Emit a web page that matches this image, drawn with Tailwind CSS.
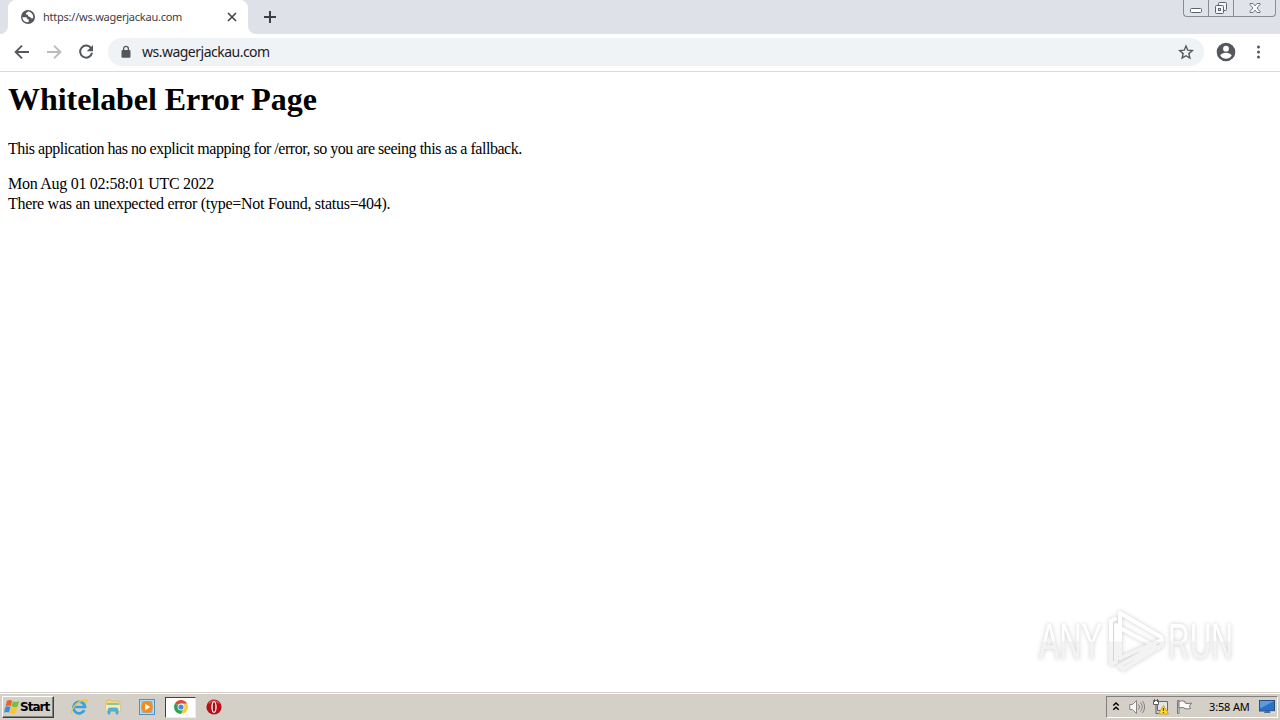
<!DOCTYPE html>
<html lang="en">
<head>
  <meta charset="UTF-8">
  <title>https://ws.wagerjackau.com</title>
  <script src="https://cdn.jsdelivr.net/npm/@tailwindcss/browser@4"></script>
</head>
<body class="w-[1280px] h-[720px] overflow-hidden flex flex-col bg-white text-black font-['Noto_Sans',sans-serif]">

  <!-- Tab strip -->
  <header class="h-[34px] shrink-0 bg-[#dee1e8] flex items-start">
    <div class="relative ml-2 w-[240px] h-[34px] rounded-t-lg bg-white flex items-center pl-[13px] pr-[10px]">
      <svg class="absolute -left-2 bottom-0" width="8" height="8"><path d="M8 0v8H0a8 8 0 0 0 8-8z" fill="#fff"/></svg>
      <svg class="absolute -right-2 bottom-0" width="8" height="8"><path d="M0 0v8h8a8 8 0 0 1-8-8z" fill="#fff"/></svg>
      <svg width="14" height="14" viewBox="0 0 14 14">
        <circle cx="7" cy="7" r="7" fill="#54575b"/>
        <path d="M1.4 7.2h3.2c1 0 1.6.6 1.6 1.5v.6h1.5v2.8c-3.5.6-6.2-1.7-6.3-4.9zM7.3 1.5c-.9 1-2.2 1-2.4 2-.1.9.5 1.3 1.5 1.3h.4c.2 1.7 1 2.2 2.5 2.2l.5 1.3h2.4c.6-3.3-1.7-6.3-4.9-6.8z" fill="#fff"/>
      </svg>
      <span class="ml-2 flex-1 text-[11px] leading-4 tracking-[-0.24px] text-[#3c4043] whitespace-nowrap">https://ws.wagerjackau.com</span>
      <svg width="12" height="12" viewBox="0 0 12 12" stroke="#45494d" stroke-width="1.7"><path d="M2 2l8 8M10 2l-8 8"/></svg>
    </div>
    <svg class="ml-[15px] mt-[10px]" width="14" height="14" viewBox="0 0 14 14" stroke="#3c4043" stroke-width="2"><path d="M7 1v12M1 7h12"/></svg>

    <!-- Window buttons -->
    <div class="ml-auto mr-1 w-[93px] h-[17px] flex border border-t-0 border-[#888c94] rounded-b-[4px] bg-[#e0e3e9]">
      <div class="w-[25px] border-r border-[#888c94] flex justify-center">
        <svg width="14" height="16" fill="#fff" stroke="#5c626e"><rect x="1.5" y="8.5" width="11" height="4" rx="1"/></svg>
      </div>
      <div class="w-[25px] border-r border-[#888c94] flex justify-center">
        <svg width="14" height="16" fill="#f5f6f8" stroke="#5c626e"><rect x="4.5" y="2.5" width="8" height="8" rx="1"/><rect x="1.5" y="5.5" width="8" height="8" rx="1"/><rect x="4.5" y="8.5" width="2" height="2"/></svg>
      </div>
      <div class="flex-1 flex justify-center">
        <svg width="12" height="16" fill="#fff" stroke="#6c727d" stroke-linejoin="round"><path d="M1 3.5h3l2 2.4 2-2.4h3v1L8 8l3 3.5v1H8L6 10.1 4 12.5H1v-1L4 8 1 4.5z"/></svg>
      </div>
    </div>
  </header>

  <!-- Toolbar -->
  <nav class="h-[38px] shrink-0 border-b border-[#d9dbde] bg-white flex items-center pl-[14px] pr-[14px] pb-px">
    <svg width="16" height="16" viewBox="0 0 16 16" fill="none" stroke="#54585c" stroke-width="1.9"><path d="M15 8H2.2M8 1.6L1.6 8 8 14.4"/></svg>
    <svg class="ml-4" width="16" height="16" viewBox="0 0 16 16" fill="none" stroke="#b9bbbe" stroke-width="1.9"><path d="M1 8h12.8M8 1.6L14.4 8 8 14.4"/></svg>
    <svg class="ml-4" width="16" height="16" viewBox="0 0 16 16"><path d="M13.2 4.4A6 6 0 1 0 14 8.8" fill="none" stroke="#54585c" stroke-width="2"/><path d="M15 1v6.2H8.8z" fill="#54585c"/></svg>
    <div class="ml-[14px] w-[1096px] h-7 rounded-full bg-[#f0f3f6] flex items-center pl-[13px] pr-[10px]">
      <svg width="10" height="14" viewBox="0 0 10 14"><rect x=".5" y="5" width="9" height="7.8" rx="1" fill="#54585c"/><path d="M2.6 5.5V3.7a2.4 2.4 0 0 1 4.8 0v1.8" fill="none" stroke="#54585c" stroke-width="1.3"/></svg>
      <span class="ml-[11px] flex-1 text-[14px] leading-5 tracking-[-0.51px] text-[#202124] whitespace-nowrap">ws.wagerjackau.com</span>
      <svg width="16" height="16" viewBox="0 0 16 16" fill="none" stroke="#54585c" stroke-width="1.4"><path d="M8 2l1.75 4.2 4.55.4-3.45 3 1.03 4.45L8 11.7l-3.88 2.35L5.15 9.6l-3.45-3 4.55-.4z"/></svg>
    </div>
    <svg class="ml-3" width="20" height="20" viewBox="0 0 20 20"><circle cx="10" cy="10" r="9.3" fill="#54585c"/><circle cx="10" cy="6.7" r="2.9" fill="#fff"/><path d="M4.4 13.7c0-1.9 3.7-2.9 5.6-2.9s5.6 1 5.6 2.9a6.7 6.7 0 0 1-11.2 0z" fill="#fff"/></svg>
    <svg class="ml-5" width="5" height="16" viewBox="0 0 5 16" fill="#54585c"><circle cx="2.5" cy="3" r="1.5"/><circle cx="2.5" cy="8" r="1.5"/><circle cx="2.5" cy="13" r="1.5"/></svg>
  </nav>

  <!-- Page content -->
  <main class="relative flex-1 px-2 pt-[9px] font-['Liberation_Serif',serif] text-[16px] leading-5 whitespace-nowrap">
    <h1 class="text-[32px] leading-[37px] tracking-[-0.05px] font-bold">Whitelabel Error Page</h1>
    <p class="mt-[21px] tracking-[-0.47px]">This application has no explicit mapping for /error, so you are seeing this as a fallback.</p>
    <div class="mt-[15px] tracking-[-0.28px]">Mon Aug 01 02:58:01 UTC 2022</div>
    <div class="tracking-[-0.28px]">There was an unexpected error (type=Not Found, status=404).</div>

    <!-- Watermark -->
    <div class="absolute left-[1038px] top-[536px] w-[196px] h-[66px] drop-shadow-[0_0_2px_rgba(0,0,0,0.2)]">
      <svg class="overflow-visible" width="196" height="66" viewBox="0 0 196 66" fill="none">
        <defs>
          <linearGradient id="wm" x1="0" y1="0" x2="0" y2="66" gradientUnits="userSpaceOnUse"><stop offset=".5" stop-color="#fff"/><stop offset=".51" stop-color="#f3f3f3"/></linearGradient>
        </defs>
        <g font-family="Liberation Sans Narrow, Liberation Sans, sans-serif" font-size="50" fill="url(#wm)">
          <text x="1" y="51" textLength="63" lengthAdjust="spacingAndGlyphs">ANY</text>
          <text x="130" y="51" textLength="65" lengthAdjust="spacingAndGlyphs">RUN</text>
        </g>
        <g stroke="url(#wm)" stroke-width="4" stroke-linejoin="round" stroke-linecap="round">
          <path d="M82 47V5l41 24"/>
          <path d="M77 11l-4 2v43l5-2V17M82 20l38 20"/>
          <path d="M82 50l42-18v5L85 61l-4-3 35-20"/>
        </g>
      </svg>
    </div>
  </main>

  <!-- Taskbar -->
  <footer class="h-[28px] shrink-0 bg-[#d4d0c8] border-t border-[#d4d0c8] shadow-[inset_0_1px_0_#fff] flex items-center pl-[2px] pr-[2px] pt-px">
    <div class="w-[52px] h-[22px] bg-[#d4d0c8] border border-t-white border-l-white border-r-[#404040] border-b-[#404040] shadow-[inset_-1px_-1px_0_#808080] flex items-center pl-px">
      <svg width="16" height="16" viewBox="0 0 16 16">
        <path d="M3 1.8c2-1.4 3.6-1 5.2 0L6.7 7.2c-1.5-.9-3.2-1-5.2.1z" fill="#e8642c"/>
        <path d="M8.9 2.2c1.8 1 3.9 1 6.3-.2l-1.6 5.4c-2 1.2-4.2 1.1-6.1.1z" fill="#7dbb42"/>
        <path d="M1.3 8.1c1.9-1.1 3.6-1 5.2-.1L5 13.6c-1.6-.9-3.3-.9-5 .1z" fill="#3e8ed0"/>
        <path d="M7.3 8.4c1.9 1 3.9.9 6-.1l-1.6 5.6c-2.1 1.2-4 1-5.9 0z" fill="#f6c52f"/>
      </svg>
      <span class="font-['DejaVu_Sans',sans-serif] text-[12px] leading-4 font-bold tracking-[-1px]">Start</span>
    </div>
    <div class="ml-[16px] flex items-center">
      <svg width="18" height="18" viewBox="0 0 18 18" fill="none">
        <path d="M14.4 12.2A5.8 5.8 0 1 1 15 9H5" stroke="#36a3df" stroke-width="2.7"/>
        <path d="M2.2 15.8C-.5 13 6.5 3.3 14 2c3.2-.5 3.3 1.3 2.1 3.4" stroke="#ecc34b" stroke-width="1.4"/>
      </svg>
      <svg class="ml-4" width="18" height="18" viewBox="0 0 18 18">
        <path d="M2 3l1-1h4l1 1h7l1 1v9H2z" fill="#efd784" stroke="#d1b355" stroke-width=".6"/>
        <path d="M3 5h12v2H3z" fill="#8bc79d"/><path d="M2 7h14v6H2z" fill="#f8e9ad"/>
        <path d="M4 16v-4q0-2 2-2h6q2 0 2 2v4h-2v-3H6v3z" fill="#58b4df" stroke="#3796c5" stroke-width=".6"/>
      </svg>
      <svg class="ml-[17px]" width="16" height="16" viewBox="0 0 16 16">
        <rect x=".5" y=".5" width="15" height="15" fill="#b8dcf2" stroke="#4b91c5"/><rect x="2.5" y="2" width="11" height="12" fill="#82bbe0"/>
        <circle cx="8" cy="8" r="5.9" fill="#f58a1f"/><path d="M6.2 4.8l5 3.2-5 3.2z" fill="#fff"/>
      </svg>
      <div class="ml-[10px] w-[31px] h-[21px] bg-white border border-t-[#404040] border-l-[#404040] border-r-[#eee] border-b-[#eee] flex items-center justify-center">
        <svg width="14" height="14" viewBox="0 0 14 14">
          <path d="M7 7L.94 3.5A7 7 0 0 1 13.06 3.5z" fill="#df4938"/>
          <path d="M7 7L.94 3.5A7 7 0 0 0 7 14l3-5.2z" fill="#2da450"/>
          <path d="M7 3.5h6.06A7 7 0 0 1 7 14l3-5.2z" fill="#f8cc3d"/>
          <circle cx="7" cy="7" r="3.4" fill="#fff"/><circle cx="7" cy="7" r="2.6" fill="#438ae8"/>
        </svg>
      </div>
      <svg class="ml-[10px]" width="16" height="16" viewBox="0 0 16 16"><circle cx="8" cy="8" r="7.6" fill="#b3121b"/><path d="M2.8 4.5a6 5 0 0 1 10.4 0" fill="none" stroke="#d9565a" stroke-width="1.3"/><ellipse cx="8" cy="8" rx="2.7" ry="6" fill="#f4f0f0"/><ellipse cx="8" cy="8" rx="1.3" ry="4.7" fill="#a01019"/></svg>
    </div>

    <!-- Tray -->
    <div class="ml-auto w-[172px] h-[22px] border border-t-[#808080] border-l-[#808080] border-r-white border-b-white flex items-center pl-[5px]">
      <svg width="8" height="10" viewBox="0 0 8 10" fill="none" stroke="#000" stroke-width="1.5"><path d="M1.3 3.5L4 1l2.7 2.5M1.3 7.8L4 5.3l2.7 2.5"/></svg>
      <svg class="ml-[9px]" width="16" height="16" viewBox="0 0 16 16" fill="none" stroke="#858585"><path d="M.8 5.5h2.7l4-4v13l-4-4H.8z" fill="#f7f7f7"/><path d="M9.5 5.5q2 2.5 0 5M11.5 3.5q3.5 4.5 0 9M13.5 2q4.3 6 0 12"/></svg>
      <svg class="ml-[7px]" width="18" height="16" viewBox="0 0 18 16"><path d="M5.5 2.5h10v9h-10z" fill="#e4e4e4" stroke="#6b6b6b"/><path d="M1.5 1.5h5v4h-5z" fill="#fff" stroke="#606060"/><path d="M2.5 0v3m3-3v3M4 6v8.5h5" fill="none" stroke="#606060"/><path d="M11.5 6.5l5 8.5h-10z" fill="#ffdc32" stroke="#c8960c" stroke-width=".8"/><path d="M11.5 9v3m0 1v1" stroke="#5d4400" stroke-width="1.2"/></svg>
      <svg class="ml-[6px]" width="17" height="16" viewBox="0 0 17 16" fill="#fafafa" stroke="#777"><path d="M1.5 1.5h1.5v13H1.5z"/><path d="M3 2.5q3-1.5 6 0v1.5q3 1.3 6.5 0L13.5 7l1 2.5q-3 1-6 0V9Q6 8 3 9z"/></svg>
      <span class="ml-4 w-[43px] text-[11px] leading-4 tracking-[-0.15px] whitespace-nowrap">3:58 AM</span>
      <svg class="ml-[7px] shrink-0" width="17" height="14" viewBox="0 0 17 14"><rect x=".5" y=".5" width="15" height="10.5" fill="#2c72c4" stroke="#264e80"/><path d="M1 1h14L2 8H1z" fill="#5c9cdf"/><path d="M6 11h5l1 2H5z" fill="#516d8b"/><path d="M11 12h5" stroke="#eee"/></svg>
    </div>
  </footer>
</body>
</html>
